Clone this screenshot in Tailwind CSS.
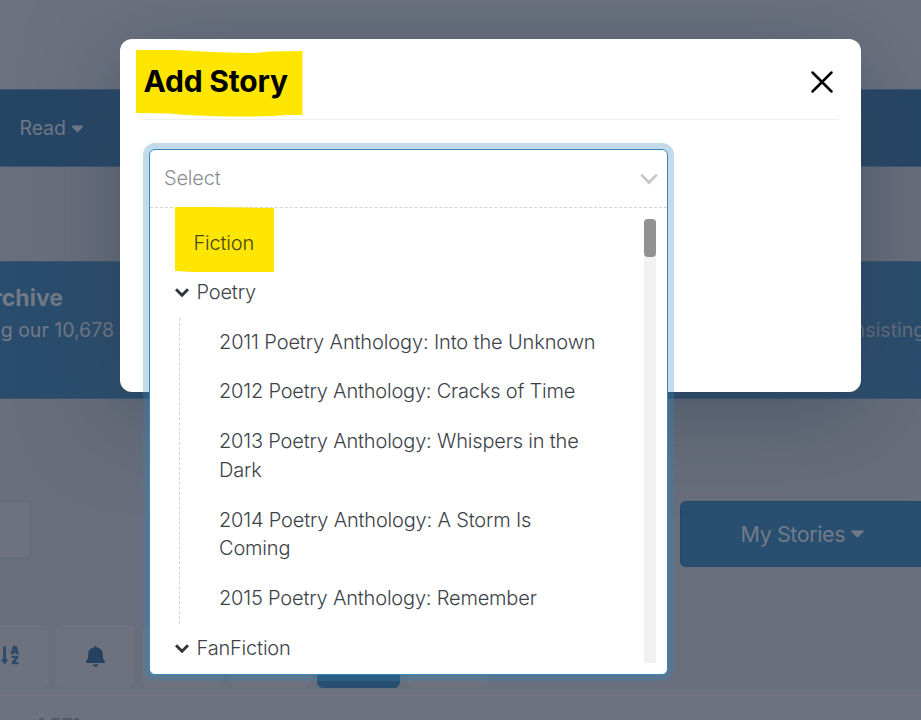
<!doctype html>
<html lang="en">
<head>
    <meta charset="UTF-8">
    <title>Add Story</title>
    <script src="https://cdn.jsdelivr.net/npm/@tailwindcss/browser@4"></script>
</head>
<body class="relative w-[921px] h-[720px] overflow-hidden bg-[#686e7b] font-[Inter,sans-serif] text-[20px]">
    <!-- page behind the modal -->
    <div class="flex flex-col h-[720px] text-[#737a87] whitespace-nowrap">
        <div class="h-[89px] shrink-0 bg-[#6c727f]"></div>
        <nav class="h-[78px] shrink-0 bg-[#264666] border-y border-[#3d5670] flex items-center pl-[19.5px] pt-px text-[19.5px]">
            <a href="#" class="flex items-center gap-[5px] tracking-[-0.1px]">Read
                <svg class="w-[13px] h-2" viewBox="0 0 12 8"><path d="M1 .5h10a.8.8 0 0 1 .6 1.3L6.7 7a1 1 0 0 1-1.4 0L.4 1.8A.8.8 0 0 1 1 .5z" fill="currentColor"/></svg>
            </a>
        </nav>
        <div class="h-[94px] shrink-0 bg-[#6a6f7c]"></div>
        <section class="h-[138px] shrink-0 bg-[#2a4d6d] border-y border-[#3d5670] flex justify-between">
            <div class="w-[114px] flex flex-col items-end pt-[22px]">
                <h2 class="font-bold text-[23px] leading-[28px] mr-[51px]">Archive</h2>
                <p class="text-[19.5px] leading-[26px] mt-[5px]">exploring our 10,678</p>
            </div>
            <p class="w-[90px] pt-[55px] leading-[26px] text-[19.5px] text-[#686e7b]">consisting</p>
        </section>
        <div class="h-[102px] shrink-0"></div>
        <div class="h-[65px] shrink-0 flex items-start justify-between">
            <div class="w-[31px] h-[58px] rounded-r-md border border-l-0 border-[#5d6a7d] bg-[#6d727e]"></div>
            <button class="w-[241px] h-[66px] rounded-l-md border border-r-0 border-[#24486a] bg-[#284f70] flex items-center pl-[59.5px] gap-[6px] text-[21.5px] tracking-[-0.4px]">My Stories
                <svg class="w-[13px] h-2" viewBox="0 0 12 8" preserveAspectRatio="none"><path d="M1 .5h10a.8.8 0 0 1 .6 1.3L6.7 7a1 1 0 0 1-1.4 0L.4 1.8A.8.8 0 0 1 1 .5z" fill="currentColor"/></svg>
            </button>
        </div>
        <div class="h-[59px] shrink-0"></div>
        <div class="h-[64px] shrink-0 flex gap-[7px] border-b border-[#667080]">
            <div class="w-[49px] rounded-r-md bg-[#6d727e] text-[#2b4a68]">
                <svg class="w-[49px] h-[62px]" viewBox="0 0 49 62" fill="currentColor"><path d="M3.2 21.500h2.800V34.500h2.400L4.600 39.500 .6 34.500h2.600z"/><g class="font-[Inter] font-black text-[10.5px]" stroke="currentColor" stroke-width=".6"><text x="10.6" y="28.8">A</text><text x="11.2" y="39.4">Z</text></g></svg>
            </div>
            <div class="w-[78px] rounded-md bg-[#6d727e] flex items-center justify-center pb-px text-[#24425f]">
                <svg class="w-[19px] h-[21px]" viewBox="0 0 18 21" preserveAspectRatio="none" fill="currentColor"><path d="M9 0c.8 0 1.200.5 1.200 1.500 3.400.6 5.700 3 5.700 6 0 4 .2 5.200 1.700 7.200.8 1 .3 2.400-.8 2.400H1.200C.1 17.100-.4 15.700.4 14.700c1.500-2 1.700-3.200 1.700-7.200 0-3 2.300-5.400 5.700-6C7.800.5 8.200 0 9 0zM6.300 18.500h5.400c-.2 1.300-1.200 2.200-2.700 2.200s-2.500-.9-2.700-2.200z"/></svg>
            </div>
            <div class="w-[81px] ml-px rounded-md bg-[#6d727e]"></div>
            <div class="w-[80px] rounded-md bg-[#6d727e]"></div>
            <div class="w-[83px] h-[63px] rounded-md bg-[#284f70]"></div>
            <div class="w-[81px] rounded-md bg-[#6d727e]"></div>
        </div>
        <div class="h-[31px] shrink-0 bg-[#6d727e] pt-[25px] text-[19.5px] leading-[24px] text-[#4c5563]"><span class="-ml-[10px]">out of 571</span></div>
    </div>

    <!-- modal -->
    <div class="absolute left-[120px] top-[39px] w-[741px] h-[353px] bg-white rounded-xl shadow-[0_18px_90px_rgba(50,65,85,0.55)] px-[22px]">
        <header class="h-[81px] border-b border-[#eeeeee] flex items-center justify-between">
            <div class="relative pl-[1.5px] pt-[4px]">
                <svg class="absolute left-[-6px] top-[-10px] w-[167px] h-[68px]" viewBox="0 0 167 68"><path d="M0 1H40Q84 4 120 4L133 2.500 166.500 2V66H152Q130 68 94 67.500 60 67 33 64.500L0 64z" fill="#ffe600"/></svg>
                <h1 class="relative font-bold text-[30px] leading-[36px] tracking-[-0.2px] text-black">Add Story</h1>
            </div>
            <svg class="w-6 h-6 mr-[5px] mt-[5px]" viewBox="0 0 24 24" stroke="#000" stroke-width="2.5" stroke-linecap="round"><path d="M2.500 2.500l19 19M21.500 2.500l-19 19"/></svg>
        </header>
    </div>

    <!-- open select -->
    <div class="absolute left-[149px] top-[149px] w-[519px] h-[526px] bg-white rounded-md border border-[#3a87bd] shadow-[0_0_0_6px_rgba(54,131,186,0.3)] text-[#3c4248] font-[360] tracking-[-0.18px]">
        <div class="h-[58px] border-b border-dashed border-[#d2d4d6] flex items-center justify-between pl-[14px] pr-[9px] text-[#8a8f92]">
            <span class="pb-[2px]">Select</span>
            <svg class="w-[18px] h-3" viewBox="0 0 18 12" fill="none" stroke="#c6c8ca" stroke-width="2.8" stroke-linecap="round"><path d="M2 2.500l7 7 7-7"/></svg>
        </div>
        <div class="flex justify-between">
            <ul class="w-[470px] pl-[25px] leading-[28.5px]">
                <li class="relative h-[60px] pt-[20.5px] pl-[18.5px]">
                    <svg class="absolute left-0 top-[-1px] w-[99px] h-[65px]" viewBox="0 0 99 65"><path d="M0 0H34L99 1V65H18L0 64z" fill="#ffe600"/></svg>
                    <span class="relative text-[#46451c]">Fiction</span>
                </li>
                <li>
                    <div class="h-[50px] flex items-center gap-[7.5px] pb-[2px]">
                        <svg class="w-[14px] h-[9px]" viewBox="0 0 14 9" fill="none" stroke="#30363b" stroke-width="3"><path d="M1 1.200l6 6 6-6"/></svg>
                        Poetry
                    </div>
                    <ul class="ml-[4px] pl-[39px] border-l border-dashed border-[#d2d4d6] h-[306px]">
                        <li class="h-[49.6px] pt-[10px] tracking-[-0.13px]">2011 Poetry Anthology: Into the Unknown</li>
                        <li class="h-[49.6px] pt-[9.5px] tracking-[-0.2px]">2012 Poetry Anthology: Cracks of Time</li>
                        <li class="h-[78.5px] pt-[10px]">2013 Poetry Anthology: Whispers in the<br>Dark</li>
                        <li class="h-[78.5px] pt-[10px]">2014 Poetry Anthology: A Storm Is<br>Coming</li>
                        <li class="h-[49.6px] pt-[10px]">2015 Poetry Anthology: Remember</li>
                    </ul>
                </li>
                <li class="h-[50px] flex items-center gap-[7.5px] pb-[2px]">
                    <svg class="w-[14px] h-[9px]" viewBox="0 0 14 9" fill="none" stroke="#30363b" stroke-width="3"><path d="M1 1.200l6 6 6-6"/></svg>
                    FanFiction
                </li>
            </ul>
            <div class="w-3 h-[444px] mt-[11px] mr-[11px] bg-[#f1f1f1]">
                <div class="h-[38px] rounded bg-[#919191]"></div>
            </div>
        </div>
    </div>
</body>
</html>
